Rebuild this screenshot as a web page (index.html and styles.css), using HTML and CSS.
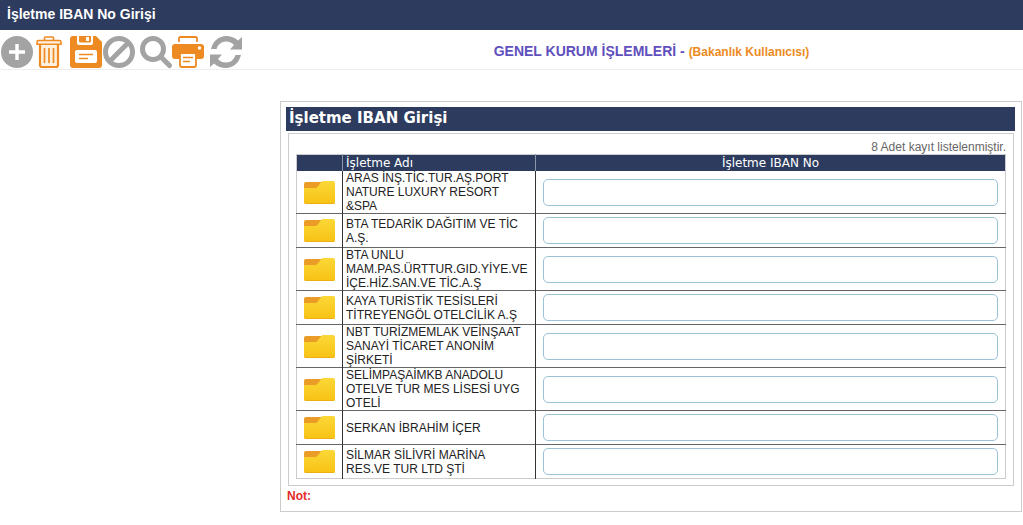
FILE: index.html
```html
<!DOCTYPE html>
<html lang="tr">
<head>
<meta charset="utf-8">
<title>İşletme IBAN No Girişi</title>
<link rel="stylesheet" href="styles.css">
</head>
<body>
<svg class="defs" aria-hidden="true">
  <defs>
    <linearGradient id="folder-front" x1="0" y1="0" x2="0" y2="1">
      <stop offset="0" stop-color="#fbd837"/>
      <stop offset="1" stop-color="#f8c215"/>
    </linearGradient>
    <symbol id="folder" viewBox="0 0 31 23">
      <path fill="#ea9c26" d="M0 3a2 2 0 0 1 2-2h15v8H0z"/>
      <path fill="url(#folder-front)" d="M0 7h10c2 0 3-.5 4-1.800l3-4c.8-1 1.500-1.200 3-1.200h9a2 2 0 0 1 2 2v19a2 2 0 0 1-2 2H2a2 2 0 0 1-2-2z"/>
      <path fill="#eeb011" d="M0 20v1a2 2 0 0 0 2 2h27a2 2 0 0 0 2-2v-1a2 2 0 0 1-2 2H2a2 2 0 0 1-2-2z"/>
    </symbol>
  </defs>
</svg>
<header class="page-title"><h1>İşletme IBAN No Girişi</h1></header>
<div class="toolbar">
  <div class="tools">
    <div class="tool-group">
      <button class="tool gray" type="button" aria-label="Ekle"><svg viewBox="0 0 32 32"><circle cx="17" cy="16" r="16" fill="currentColor"/><path d="M17 8v16M9 16h16" stroke="#fff" stroke-width="3.4"/></svg></button>
      <button class="tool orange" type="button" aria-label="Sil"><svg viewBox="0 0 32 32" fill="none" stroke="currentColor"><path stroke-width="1.600" d="M12.500 4V2q0-1 1-1h7q1 0 1 1v2"/><path fill="#fdf0df" stroke-width="2.200" d="M8 9v20q0 2 2 2h14q2 0 2-2V9"/><path fill="#fdf0df" stroke-width="1.600" d="M5 8.300V6q0-1.500 1.500-1.500h21Q29 4.500 29 6v2.300z"/><path stroke-width="1.700" d="M12.500 12v15M17 12v15M21.500 12v15"/></svg></button>
    </div>
    <div class="tool-group">
      <button class="tool orange" type="button" aria-label="Kaydet"><svg viewBox="0 0 32 32"><path fill="currentColor" d="M3 0h4v7q0 2 2 2h12q2 0 2-2V0h3l6 6v23q0 3-3 3H3q-3 0-3-3V3q0-3 3-3z"/><path fill="currentColor" d="M9 0h12v5q0 1.500-1.500 1.500h-9Q9 6.500 9 5z"/><path fill="#fff" d="M16 1h3v4h-3zM7 14h18q2 0 2 2v9q0 2-2 2H7q-2 0-2-2v-9q0-2 2-2z"/><path stroke="currentColor" stroke-width="1.700" d="M9 18.500h14M9 22.500h9"/></svg></button>
      <button class="tool gray" type="button" aria-label="İptal"><svg viewBox="0 0 32 32" fill="none" stroke="currentColor" stroke-width="5"><circle cx="17" cy="16" r="13.500"/><path d="M7.500 25.500l19-19"/></svg></button>
    </div>
    <div class="tool-group">
      <button class="tool gray" type="button" aria-label="Ara"><svg viewBox="0 0 32 32" fill="none" stroke="currentColor"><circle cx="13" cy="13" r="10.500" stroke-width="5"/><path d="M21 21l8.500 8.500" stroke-width="5" stroke-linecap="round"/></svg></button>
      <button class="tool orange" type="button" aria-label="Yazdır"><svg viewBox="0 0 32 32"><path fill="none" stroke="currentColor" stroke-width="1.800" d="M7 6V2.500Q7 1 8.500 1h15Q25 1 25 2.500V6"/><path fill="currentColor" d="M3 8h26q3 0 3 3v9q0 3-3 3H3q-3 0-3-3v-9q0-3 3-3z"/><circle cx="27.500" cy="12" r="1.700" fill="#fff"/><path fill="#fff" stroke="currentColor" stroke-width="1.800" d="M8 17h16v12q0 2-2 2H10q-2 0-2-2z"/><path stroke="currentColor" stroke-width="1.700" d="M11 21.500h10M11 25.500h7"/></svg></button>
    </div>
    <div class="tool-group">
      <button class="tool gray" type="button" aria-label="Yenile"><svg viewBox="0 0 32 32" fill="currentColor"><path d="M1 13C3 5 9 0 16 0q7 0 12 4.500L32 1v12.500H20l4-4.500Q21 5.500 16 5.500q-7 0-9.500 7.500z"/><path d="M31 19c-2 8-8 13-15 13q-7 0-12-4.500L0 31V18.500h12L8 23q3 3.500 8 3.500 7 0 9.500-7.500z"/></svg></button>
    </div>
  </div>
  <h2 class="module">GENEL KURUM İŞLEMLERİ - <span class="user">(Bakanlık Kullanıcısı)</span></h2>
</div>
<main class="panel">
  <h3 class="panel-title">İşletme IBAN Girişi</h3>
  <div class="list">
    <p class="count">8 Adet kayıt listelenmiştir.</p>
    <table class="grid">
      <colgroup><col class="col-icon"><col class="col-name"><col></colgroup>
      <thead>
        <tr><th></th><th class="head-name" scope="col">İşletme Adı</th><th scope="col">İşletme IBAN No</th></tr>
      </thead>
      <tbody>
        <tr><td class="icon-cell"><svg class="folder"><use href="#folder"/></svg></td><td class="name"><label for="iban1">ARAS İNŞ.TİC.TUR.AŞ.PORT<br>NATURE LUXURY RESORT<br>&amp;SPA</label></td><td class="entry"><input class="iban" id="iban1" type="text"></td></tr>
        <tr><td class="icon-cell"><svg class="folder"><use href="#folder"/></svg></td><td class="name"><label for="iban2">BTA TEDARİK DAĞITIM VE TİC<br>A.Ş.</label></td><td class="entry"><input class="iban" id="iban2" type="text"></td></tr>
        <tr><td class="icon-cell"><svg class="folder"><use href="#folder"/></svg></td><td class="name"><label for="iban3">BTA UNLU<br>MAM.PAS.ÜRTTUR.GID.YİYE.VE<br>İÇE.HİZ.SAN.VE TİC.A.Ş</label></td><td class="entry"><input class="iban" id="iban3" type="text"></td></tr>
        <tr><td class="icon-cell"><svg class="folder"><use href="#folder"/></svg></td><td class="name"><label for="iban4">KAYA TURİSTİK TESİSLERİ<br>TİTREYENGÖL OTELCİLİK A.Ş</label></td><td class="entry"><input class="iban" id="iban4" type="text"></td></tr>
        <tr><td class="icon-cell"><svg class="folder"><use href="#folder"/></svg></td><td class="name"><label for="iban5">NBT TURİZMEMLAK VEİNŞAAT<br>SANAYİ TİCARET ANONİM<br>ŞİRKETİ</label></td><td class="entry"><input class="iban" id="iban5" type="text"></td></tr>
        <tr><td class="icon-cell"><svg class="folder"><use href="#folder"/></svg></td><td class="name"><label for="iban6">SELİMPAŞAİMKB ANADOLU<br>OTELVE TUR MES LİSESİ UYG<br>OTELİ</label></td><td class="entry"><input class="iban" id="iban6" type="text"></td></tr>
        <tr><td class="icon-cell"><svg class="folder"><use href="#folder"/></svg></td><td class="name"><label for="iban7">SERKAN İBRAHİM İÇER</label></td><td class="entry"><input class="iban" id="iban7" type="text"></td></tr>
        <tr><td class="icon-cell"><svg class="folder"><use href="#folder"/></svg></td><td class="name"><label for="iban8">SİLMAR SİLİVRİ MARİNA<br>RES.VE TUR LTD ŞTİ</label></td><td class="entry"><input class="iban" id="iban8" type="text"></td></tr>
      </tbody>
    </table>
  </div>
  <p class="note">Not:</p>
</main>
</body>
</html>
```
FILE: styles.css
```css
* { box-sizing: border-box; }

body {
  margin: 0;
  background: #fff;
  font-family: "Liberation Sans", Arial, sans-serif;
  font-size: 12px;
  line-height: 14px;
  color: #222;
}

h1, h2, h3, p { margin: 0; }

.defs {
  position: absolute;
  width: 0;
  height: 0;
}

.page-title {
  padding: 5px 7px 7px;
  background: #2c3b5e;
  color: #fff;
}

.page-title h1 {
  font-size: 14px;
  line-height: 18px;
}

.toolbar {
  display: grid;
  grid-template-columns: 280px 1fr;
  align-items: center;
  height: 40px;
  border-bottom: 1px solid #eee;
}

.tools { display: flex; gap: 6px; padding-top: 5px; }
.tool-group { display: flex; }

.tool {
  width: 32px;
  height: 32px;
  padding: 0;
  border: 0;
  background: none;
}

.tool svg { display: block; width: 32px; height: 32px; overflow: visible; }
.gray { color: #a3a3a3; }
.orange { color: #ed8b22; }

.module {
  padding-top: 4px;
  text-align: center;
  font-size: 14px;
  line-height: 18px;
  color: #5f50bd;
}

.user { font-size: 12px; color: #ed8b22; }

.panel {
  margin: 31px 1px 0 280px;
  padding: 5px 6px 5px 5px;
  border: 1px solid #ccc;
}

.panel-title {
  padding: 1px 3px 3px;
  background: #2c3b5e;
  color: #fff;
  font-family: "DejaVu Sans", Verdana, sans-serif;
  font-size: 15px;
  line-height: 20px;
}

.list {
  margin: 2px 1px 2px 2px;
  padding: 6px 7px;
  border: 1px solid #ccc;
}

.count {
  text-align: right;
  color: #666;
}

.grid {
  width: 100%;
  table-layout: fixed;
  border-collapse: collapse;
  border: 1px solid #ccc;
}

.col-icon { width: 46px; }
.col-name { width: 193px; }

.grid th {
  height: 16px;
  padding: 0;
  background: #2c3b5e;
  color: #fff;
  font-family: "DejaVu Sans", Verdana, sans-serif;
  font-size: 12px;
  font-weight: 400;
  line-height: 16px;
}

.grid th + th { border-left: 1px solid #8d96a9; }
.grid .head-name { padding-left: 3px; text-align: left; }

.grid td { padding: 0; vertical-align: middle; }
.grid td + td { border-left: 1px solid #333; }
.grid tbody tr + tr td { border-top: 1px solid #666; }

.folder { display: block; width: 31px; height: 23px; margin: 0 auto; }

.grid .name { padding-left: 3px; white-space: nowrap; }
.grid .entry { padding: 3px 7px; }

.iban {
  display: block;
  width: 100%;
  height: 27px;
  padding: 0 6px;
  border: 1px solid #9bc3d8;
  border-radius: 5px;
  background: #fff;
  font: inherit;
}

.note {
  padding: 1px 1px 3px;
  color: #e52b2b;
  font-weight: 700;
}
```
